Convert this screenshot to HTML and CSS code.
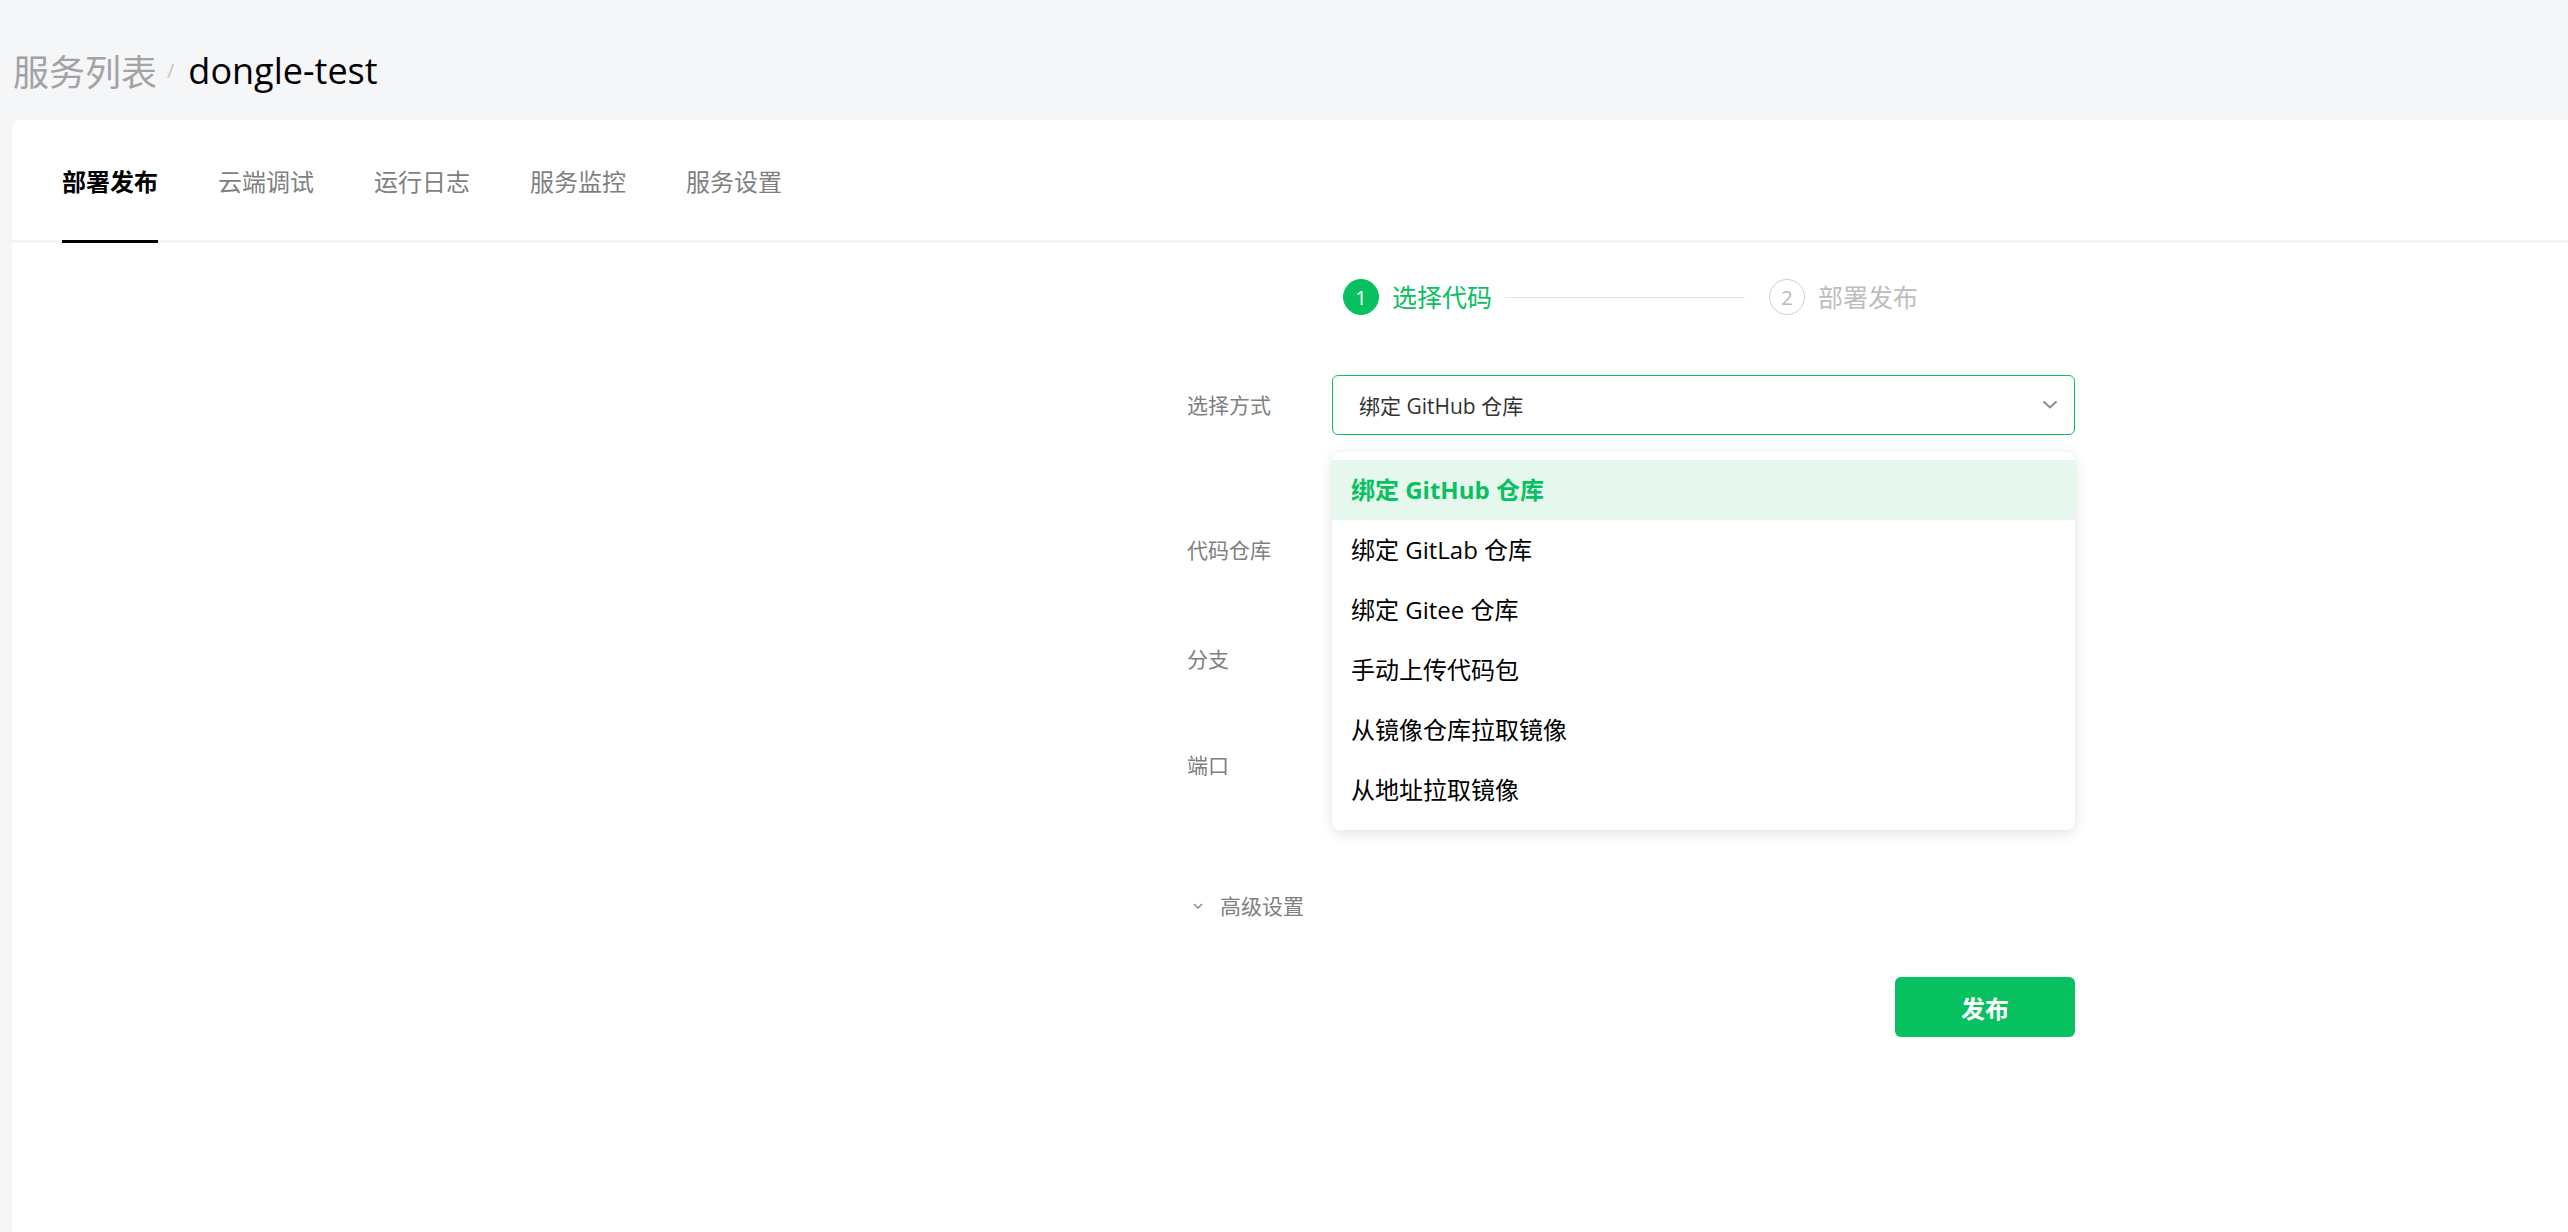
FILE: index.html
```html
<!DOCTYPE html>
<html lang="zh-CN">
<head>
    <meta charset="UTF-8">
    <meta name="viewport" content="width=device-width, initial-scale=1.0">
    <title>dongle-test - 部署发布</title>
    <link rel="stylesheet" href="styles.css">
</head>
<body>
    <div class="crumbs">
        <span class="crumb-parent">服务列表</span>
        <span class="crumb-sep">/</span>
        <span class="crumb-current">dongle-test</span>
    </div>

    <div class="card">
        <div class="tabs">
            <div class="tab active">部署发布</div>
            <div class="tab">云端调试</div>
            <div class="tab">运行日志</div>
            <div class="tab">服务监控</div>
            <div class="tab">服务设置</div>
        </div>

        <div class="deploy">
            <div class="steps">
                <div class="step done">
                    <span class="step-num">1</span>
                    <span class="step-title">选择代码</span>
                </div>
                <div class="step-line"></div>
                <div class="step">
                    <span class="step-num">2</span>
                    <span class="step-title">部署发布</span>
                </div>
            </div>

            <div class="form">
                <div class="form-item item-method">
                    <label class="form-label">选择方式</label>
                    <div class="form-control">
                        <div class="select open">
                            <span class="select-value">绑定 GitHub 仓库</span>
                            <svg class="select-arrow" width="16" height="10" viewBox="0 0 16 10">
                                <path d="M1.5 1.5 L8 7.5 L14.5 1.5" fill="none" stroke="#8a8a8a" stroke-width="2"/>
                            </svg>
                        </div>
                        <ul class="dropdown">
                            <li class="option selected">绑定 GitHub 仓库</li>
                            <li class="option">绑定 GitLab 仓库</li>
                            <li class="option">绑定 Gitee 仓库</li>
                            <li class="option">手动上传代码包</li>
                            <li class="option">从镜像仓库拉取镜像</li>
                            <li class="option">从地址拉取镜像</li>
                        </ul>
                    </div>
                </div>
                <div class="form-item item-repo">
                    <label class="form-label">代码仓库</label>
                    <div class="form-control"><div class="input"></div></div>
                </div>
                <div class="form-item item-branch">
                    <label class="form-label">分支</label>
                    <div class="form-control"><div class="input"></div></div>
                </div>
                <div class="form-item">
                    <label class="form-label">端口</label>
                    <div class="form-control"><div class="input"></div></div>
                </div>

                <div class="advanced">
                    <svg class="advanced-arrow" width="10" height="6" viewBox="0 0 10 6">
                        <path d="M1 1 L5 5 L9 1" fill="none" stroke="#8a8a8a" stroke-width="1.5"/>
                    </svg>
                    <span>高级设置</span>
                </div>

                <div class="actions">
                    <button class="btn-primary">发布</button>
                </div>
            </div>
        </div>
    </div>
</body>
</html>
```

FILE: styles.css
```css
body {
    margin: 0;
    background-color: #f5f6f8;
    font-family: 'Open Sans', 'Noto Sans CJK SC', sans-serif;
    color: #000;
    overflow: hidden;
}

/* 面包屑 */
.crumbs {
    box-sizing: border-box;
    height: 120px;
    padding: 20px 0 0 13px;
    display: flex;
    align-items: center;
    white-space: nowrap;
}
.crumb-parent {
    font-size: 36px;
    color: #a3a3a3;
}
.crumb-sep {
    font-size: 20px;
    color: #c4c4c4;
    margin: 0 14px 0 10px;
}
.crumb-current {
    font-size: 36px;
    color: #000;
}

/* 主卡片 */
.card {
    margin-left: 12px;
    min-height: calc(100vh - 120px);
    background-color: #fff;
    border-top-left-radius: 8px;
}

/* 顶部 tab */
.tabs {
    display: flex;
    gap: 60px;
    padding-left: 50px;
    border-bottom: 3px solid #f3f4f6;
}
.tab {
    padding: 44px 0 40px;
    margin-bottom: -3px;
    font-size: 24px;
    line-height: 36px;
    color: #7f7f7f;
    border-bottom: 3px solid transparent;
    white-space: nowrap;
}
.tab.active {
    color: #000;
    font-weight: bold;
    border-bottom-color: #000;
}

/* 部署表单区域 */
.deploy {
    padding: 36px 0 0 1175px;
}
.steps {
    display: flex;
    align-items: center;
    padding-left: 156px;
    height: 36px;
}
.step {
    display: flex;
    align-items: center;
    gap: 13px;
    color: #bdbdbd;
}
.step-num {
    width: 34px;
    height: 34px;
    border: 1px solid #cfcfcf;
    border-radius: 50%;
    display: flex;
    align-items: center;
    justify-content: center;
    font-size: 20px;
    color: #b8b8b8;
}
.step-title {
    font-size: 25px;
    line-height: 36px;
    white-space: nowrap;
}
.step.done {
    color: #07c160;
}
.step.done .step-num {
    background-color: #07c160;
    border-color: #07c160;
    color: #fff;
}
.step-line {
    width: 240px;
    height: 1px;
    background-color: #e3e3e3;
    margin: 0 24px 0 13px;
}

.form {
    width: 888px;
    margin-top: 60px;
}
.form-item {
    display: flex;
    margin-bottom: 46px;
}
.form-item.item-method {
    margin-bottom: 85px;
}
.form-item.item-repo {
    margin-bottom: 49px;
}
.form-label {
    width: 145px;
    flex-shrink: 0;
    font-size: 21px;
    line-height: 60px;
    color: #808080;
}
.form-control {
    flex: 1;
    position: relative;
}
.input {
    height: 58px;
    border: 1px solid #e2e2e2;
    border-radius: 6px;
}

.select {
    height: 58px;
    border: 1px solid #07c160;
    border-radius: 6px;
    display: flex;
    align-items: center;
    justify-content: space-between;
    padding: 0 16px 0 26px;
}
.select-value {
    font-size: 21px;
    color: #333;
}
.select-arrow {
    display: block;
}

/* 下拉选项 */
.dropdown {
    position: absolute;
    top: 77px;
    left: 0;
    right: 0;
    z-index: 10;
    margin: 0;
    padding: 8px 0 10px;
    list-style: none;
    background-color: #fff;
    border-radius: 8px;
    box-shadow: 0 3px 14px rgba(0, 0, 0, 0.12);
}
.option {
    height: 60px;
    line-height: 60px;
    padding: 0 19px;
    font-size: 24px;
    color: #000;
}
.option.selected {
    background-color: #e6f8ee;
    color: #07c160;
    font-weight: bold;
}

.advanced {
    display: flex;
    align-items: center;
    gap: 17px;
    margin-top: 96px;
    padding-left: 6px;
    font-size: 21px;
    line-height: 30px;
    color: #808080;
}

.actions {
    display: flex;
    justify-content: flex-end;
    margin-top: 56px;
}
.btn-primary {
    width: 180px;
    height: 60px;
    border: none;
    border-radius: 6px;
    background-color: #07c160;
    color: #fff;
    font-family: inherit;
    font-size: 24px;
    font-weight: bold;
    cursor: pointer;
}
```
